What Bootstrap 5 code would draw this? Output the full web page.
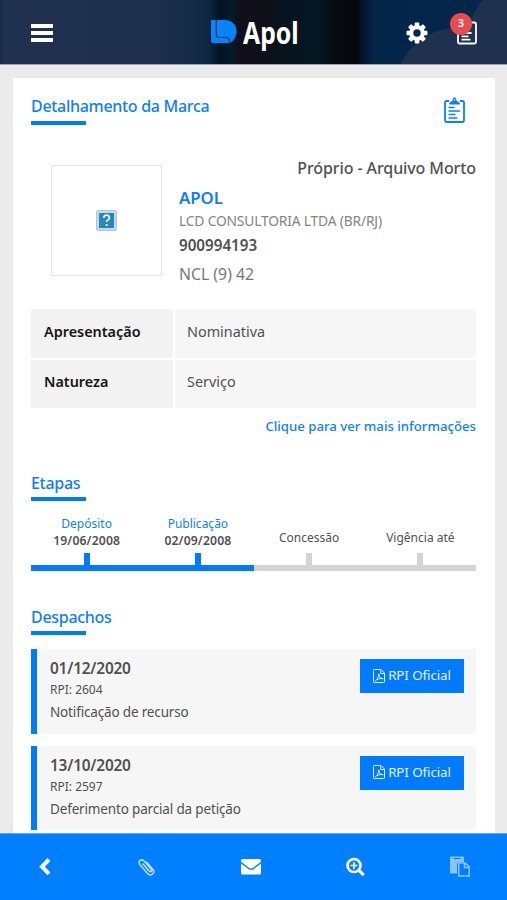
<!DOCTYPE html>
<html lang="pt-BR">
<head>
<meta charset="utf-8">
<meta name="viewport" content="width=device-width, initial-scale=1">
<title>Apol</title>
<link href="https://cdn.jsdelivr.net/npm/bootstrap@5.3.0/dist/css/bootstrap.min.css" rel="stylesheet">
<style>
body{font-family:"Noto Sans","Open Sans",sans-serif;background:#ebebeb;height:900px;overflow:hidden;color:#505050;line-height:20px}
svg{display:block}
.topbar{height:65px;border-bottom:1px solid #9aa3ae;padding:2px 30px 0 31px;position:relative;
background:linear-gradient(90deg,#172c4a 0,#20304f 6px,#1f304e 150px,#152b48 190px,#0c2741 209px,#031323 220px,#061a2b 231px,#100f18 240px,#0d1017 265px,#041521 290px,#061724 315px,#070b10 335px,#05070c 356px,#02172f 364px,#04254a 375px,#05274b 507px)}
.sky{position:absolute;right:0;top:0}
.topbar>div{position:relative}
.brand-box{margin-left:64px;padding-bottom:2px}
.brandname{font:bold 31px/32px "Noto Sans",sans-serif;color:#fff;transform:scaleX(.8);transform-origin:0 50%}
.tools{gap:29px}
.counter{position:absolute;left:-7px;top:-8px;width:22px;height:22px;background:#e84c50;font-size:11px;line-height:20px}
.sheet{height:755px;margin:13px 12px 0 13px;padding:18px 19px 0 18px;overflow:hidden}
.sheet-head{height:62px}
.clip-icon{margin:1px 11px 0 0}
.title{color:#0d7ff5;font-size:16px;font-weight:500;line-height:20px;margin:0;letter-spacing:-.3px}
.title::after{content:"";display:block;width:55px;height:4px;margin-top:5px;background:#007bff}
.title-stages{margin-top:37px}
.title-stages::after{margin-top:4px}
.title-notices{margin:36px 0 14px}
.title-notices::after{margin-top:4px}
.blue{color:#0d7ff5}
.thumb{width:111px;height:111px;border:1px solid #e4e4e4;margin:7px 17px 0 20px}
.status{font-size:16px;letter-spacing:-.1px}
.mark-name{font-size:16.8px;margin-top:10px}
.owner{font-size:13.8px;letter-spacing:-.17px;color:#848484;margin-top:3px}
.process{font-size:15.2px;margin-top:4px}
.ncl{font-size:15.8px;color:#777;margin-top:9px}
.facts{display:grid;grid-template-columns:142px 1fr;gap:2px 2px;margin-top:25px;font-size:14.4px}
.facts>div{background:#f6f6f6;height:48.5px;padding:12.5px 12px 0}
.facts>div:nth-child(odd){background:#f2f2f2;color:#151515;font-weight:600;padding-left:13px}
.more{font-size:13.2px;margin-top:8px}
.stages{margin-top:12px;font-size:12px;line-height:17px;text-align:center}
.stage{height:58px;border-bottom:6px solid #d3d3d3}
.stage::after{content:"";width:6px;height:12px;background:#d3d3d3;margin-top:7px}
.stage.done{border-color:#007bff}
.stage.done::after{background:#007bff;margin-top:4px}
.stage-date{font-size:12.2px;font-weight:600;letter-spacing:.15px}
.notice{height:84.5px;background:#f6f6f6;border-left:6px solid #007bff;padding:10px 12px 0 13px;margin-bottom:12px}
.when{font-size:15.4px;font-weight:600;line-height:20px;letter-spacing:-.2px}
.rpi{font-size:12px;line-height:22px}
.what{font-size:13.5px;line-height:22px;letter-spacing:-.16px}
.pdf{background:#007bff;color:#e5f2ff;border-radius:0;width:104px;height:34px;font-size:13.4px;letter-spacing:-.1px;gap:3px;padding:0 0 1px}
.dock{height:67px;background:#007fff;border-top:1px solid #58aaff;padding:0 37px 1px 38px}
</style>
</head>
<body>
<header class="topbar d-flex align-items-center justify-content-between">
  <svg class="sky" width="110" height="64" viewBox="0 0 110 64"><path d="M4 64C12 47 30 30 56 28 76 25 77 8 86 0h24v64z" fill="#203150"/></svg>
  <div><svg width="22" height="20" fill="#fff"><path d="M0 1h22v4H0zM0 8h22v4H0zM0 15h22v4H0z"/></svg></div>
  <div class="d-flex align-items-center brand-box">
    <svg width="32" height="24" viewBox="0 0 32 24"><path d="M0 0h13c16 0 15 18 6 23H2q-2 0-2-2z" fill="#0783fb"/><path d="M5.300 0v14.500q0 3 3 3H15q3.500 0 3.500 3V24" fill="none" stroke="#06365f" stroke-width="1.200"/></svg>
    <span class="brandname">Apol</span>
  </div>
  <div class="tools d-flex align-items-center">
    <svg width="22" height="22" viewBox="-11 -11 22 22"><g fill="#fff"><g id="teeth"><rect x="-2.3" y="-10.5" width="4.6" height="21" rx="1"/><rect x="-10.5" y="-2.3" width="21" height="4.6" rx="1"/></g><use href="#teeth" transform="rotate(45)"/><circle r="7.8"/></g><circle r="3.7" fill="#06264a"/></svg>
    <div class="position-relative">
      <svg width="20" height="24" viewBox="0 0 20 24" fill="none" stroke="#fff" stroke-width="1.8"><rect x="1" y="1.5" width="18" height="21" rx="1.5"/><path d="M4.500 8h7M4.500 12h10M4.500 15.300h7M4.500 18.600h9"/></svg>
      <span class="counter rounded-circle text-white text-center fw-semibold">3</span>
    </div>
  </div>
</header>

<main class="sheet bg-white">
  <div class="sheet-head d-flex justify-content-between">
    <h1 class="title">Detalhamento da Marca</h1>
    <svg class="clip-icon" width="21" height="26" viewBox="0 0 21 26"><path d="M5 4H2.500Q1 4 1 5.500v18Q1 25 2.500 25h16q1.500 0 1.500-1.500v-18Q20 4 18.500 4H16" fill="none" stroke="#0d7ff5" stroke-width="1.800"/><path d="M5 7.500q0-3 3.500-3.500V2.500q2-4.500 4 0V4q3.500.5 3.500 3.500z" fill="#0d7ff5"/><circle cx="10.500" cy="2.800" r=".8" fill="#fff"/><path d="M4.500 10.500h6M4.500 14h11.500M4.500 17.500h7M4.500 21h9" stroke="#0d7ff5" stroke-width="1.700"/></svg>
  </div>
  <section class="d-flex">
    <div class="thumb d-flex align-items-center justify-content-center flex-shrink-0">
      <svg width="21" height="21" viewBox="0 0 21 21"><rect x=".5" y=".5" width="20" height="20" rx="1.500" fill="#c6d9ec" stroke="#b3c5d7"/><rect x="3" y="3" width="15" height="15" fill="#2788b9"/><path d="M7.700 8q0-2.800 2.900-2.800t2.900 2.400q0 1.300-1.600 2.300-1.300.8-1.300 2.200" fill="none" stroke="#fff" stroke-width="1.700"/><path d="M9.700 14h1.900v1.900H9.700z" fill="#fff"/></svg>
    </div>
    <div class="flex-grow-1">
      <div class="status text-end fw-medium">Próprio - Arquivo Morto</div>
      <div class="mark-name blue fw-semibold">APOL</div>
      <div class="owner">LCD CONSULTORIA LTDA (BR/RJ)</div>
      <div class="process fw-semibold">900994193</div>
      <div class="ncl">NCL (9) 42</div>
    </div>
  </section>
  <div class="facts"><div>Apresentação</div><div>Nominativa</div><div>Natureza</div><div>Serviço</div></div>
  <div class="more text-end blue fw-medium">Clique para ver mais informações</div>
  <h2 class="title title-stages">Etapas</h2>
  <div class="stages row g-0">
    <div class="stage done col d-flex flex-column align-items-center justify-content-end"><span class="blue">Depósito</span><span class="stage-date">19/06/2008</span></div>
    <div class="stage done col d-flex flex-column align-items-center justify-content-end"><span class="blue">Publicação</span><span class="stage-date">02/09/2008</span></div>
    <div class="stage col d-flex flex-column align-items-center justify-content-end"><span>Concessão</span></div>
    <div class="stage col d-flex flex-column align-items-center justify-content-end"><span>Vigência até</span></div>
  </div>
  <h2 class="title title-notices">Despachos</h2>
  <article class="notice d-flex justify-content-between">
    <div><div class="when">01/12/2020</div><div class="rpi">RPI: 2604</div><div class="what">Notificação de recurso</div></div>
    <a class="btn pdf d-flex align-items-center justify-content-center"><svg width="12" height="14" viewBox="0 0 12 14" fill="none" stroke="#e5f2ff"><path d="M.5 1.200q0-.7.7-.7h6.800l3.500 3.500v8.800q0 .7-.7.7H1.200q-.7 0-.7-.7zM7.700.8v3.700h3.500M2 12c3-2 4-5 3.700-7.300 0 3 2 5 4.500 5-2-.4-4.700 0-6.700 1.200"/></svg>RPI Oficial</a>
  </article>
  <article class="notice d-flex justify-content-between">
    <div><div class="when">13/10/2020</div><div class="rpi">RPI: 2597</div><div class="what">Deferimento parcial da petição</div></div>
    <a class="btn pdf d-flex align-items-center justify-content-center"><svg width="12" height="14" viewBox="0 0 12 14" fill="none" stroke="#e5f2ff"><path d="M.5 1.200q0-.7.7-.7h6.800l3.500 3.500v8.800q0 .7-.7.7H1.200q-.7 0-.7-.7zM7.700.8v3.700h3.500M2 12c3-2 4-5 3.700-7.300 0 3 2 5 4.500 5-2-.4-4.700 0-6.700 1.200"/></svg>RPI Oficial</a>
  </article>
</main>

<nav class="dock d-flex align-items-center justify-content-between">
  <svg width="14" height="20" viewBox="0 0 14 20"><path d="M11 2.500L4 9.700l7 7.200" fill="none" stroke="#fff" stroke-width="4"/></svg>
  <svg width="18" height="20" viewBox="0 0 18 20" fill="none" stroke="#b9dcff" stroke-width="1.600" stroke-linecap="round"><path d="M6 7l6 7c1.500 1.700 3.500 0 2.200-1.700L7.500 4.400C4.500 1 .2 4.300 3 7.700l7.500 8.800c3.300 3.500 8.200-.3 5.200-4.200L9.500 5"/></svg>
  <svg width="20" height="17" viewBox="0 0 20 17"><rect y="1" width="20" height="15.500" rx="1.500" fill="#fff"/><path d="M0 4.500l7.500 5.800q2.500 1.700 5 0L20 4.500" fill="none" stroke="#007fff" stroke-width="1.400"/></svg>
  <svg width="19" height="20" viewBox="0 0 19 20" fill="none" stroke="#fff"><circle cx="8" cy="8.500" r="6.500" stroke-width="2.600"/><path d="M12.700 13.200l5 5" stroke-width="3.200"/><path d="M8 5v7M4.500 8.500h7" stroke-width="1.600"/></svg>
  <svg width="20" height="21" viewBox="0 0 20 21"><path d="M0 1.500Q0 .5 1 .5h12q1 0 1 1V6H9.500Q7 6 7 8.500v9H1q-1 0-1-1z" fill="#8ac4ff"/><path d="M3.500 2.500h7" stroke="#007fff"/><path d="M8.700 6.900h6.600l3.900 4v9.200H8.700zM14.500 7v4.500H19" fill="none" stroke="#8ac4ff" stroke-width="1.500"/></svg>
</nav>
<script src="https://cdn.jsdelivr.net/npm/bootstrap@5.3.0/dist/js/bootstrap.bundle.min.js"></script>
</body>
</html>
